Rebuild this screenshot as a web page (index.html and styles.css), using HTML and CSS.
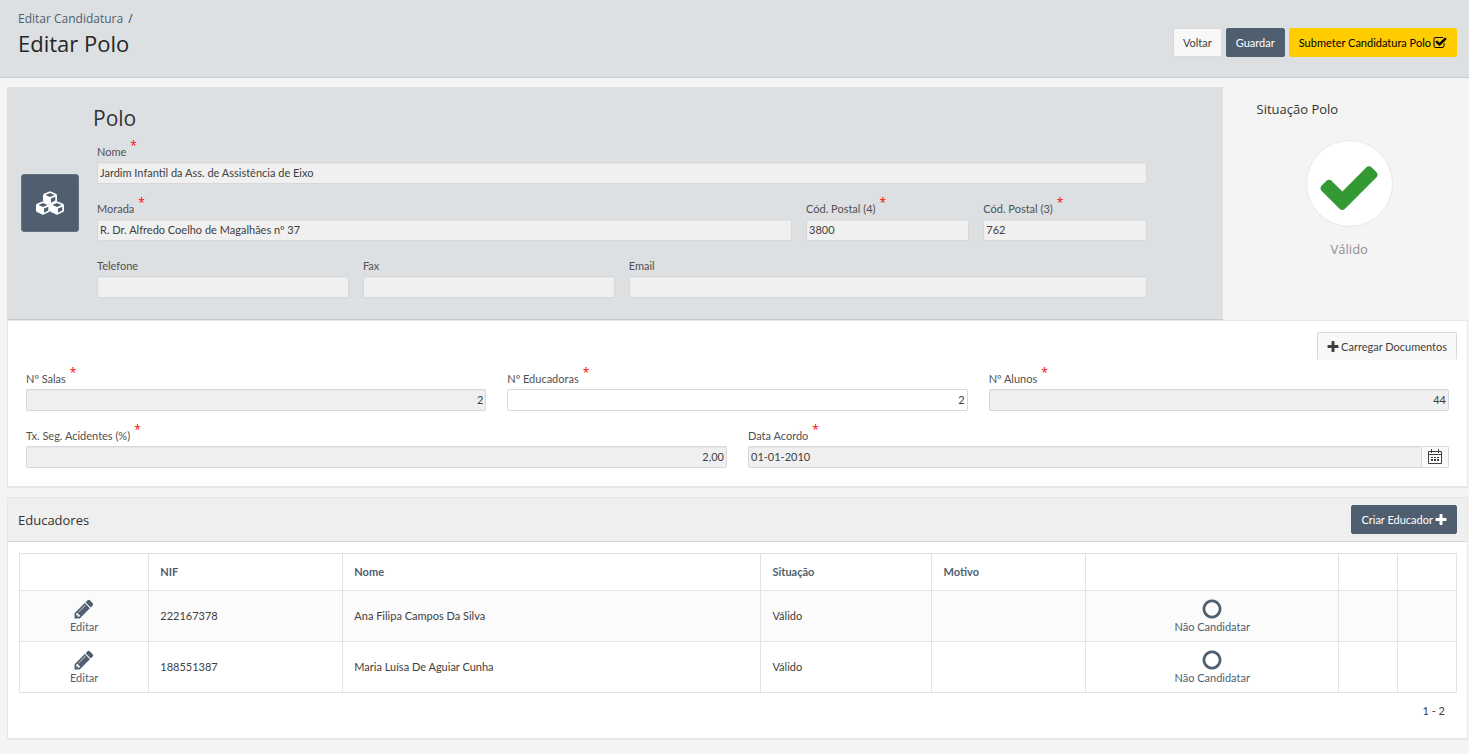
FILE: index.html
```html
<!DOCTYPE html>
<html lang="pt">
<head>
<meta charset="utf-8">
<title>Editar Polo</title>
<link rel="stylesheet" href="styles.css">
</head>
<body>
<svg class="defs" aria-hidden="true">
  <symbol id="i-plus" viewBox="128 0 1536 1792"><path d="M1600 736v192q0 40-28 68t-68 28h-416v416q0 40-28 68t-68 28h-192q-40 0-68-28t-28-68v-416h-416q-40 0-68-28t-28-68v-192q0-40 28-68t68-28h416v-416q0-40 28-68t68-28h192q40 0 68 28t28 68v416h416q40 0 68 28t28 68z"/></symbol>
  <symbol id="i-check" viewBox="0 0 1792 1792"><path d="M1671 566q0 40-28 68l-724 724-136 136q-28 28-68 28t-68-28l-136-136-362-362q-28-28-28-68t28-68l136-136q28-28 68-28t68 28l294 295 656-657q28-28 68-28t68 28l136 136q28 28 28 68z"/></symbol>
  <symbol id="i-pencil" viewBox="0 0 1792 1792"><path d="M491 1536l91-91-235-235-91 91v107h128v128h107zm523-928q0-22-22-22-10 0-17 7l-542 542q-7 7-7 17 0 22 22 22 10 0 17-7l542-542q7-7 7-17zm-54-192l416 416-832 832h-416v-416zm683 96q0 53-37 90l-166 166-416-416 166-165q36-38 90-38 53 0 91 38l235 234q37 39 37 91z"/></symbol>
  <symbol id="i-circle" viewBox="0 0 1792 1792"><path d="M896 352q-148 0-273 73t-198 198-73 273 73 273 198 198 273 73 273-73 198-198 73-273-73-273-198-198-273-73zm768 544q0 209-103 385.5t-279.5 279.5-385.5 103-385.5-103-279.5-279.5-103-385.5 103-385.5 279.5-279.5 385.5-103 385.5 103 279.5 279.5 103 385.5z"/></symbol>
  <symbol id="i-checkbox" viewBox="0 0 1792 1792"><path d="M1472 930v318q0 119-84.5 203.5t-203.5 84.5h-832q-119 0-203.5-84.5t-84.5-203.5v-832q0-119 84.5-203.5t203.5-84.5h832q63 0 117 25 15 7 18 23 3 17-9 29l-49 49q-10 10-23 10-3 0-9-2-23-6-45-6h-832q-66 0-113 47t-47 113v832q0 66 47 113t113 47h832q66 0 113-47t47-113v-254q0-13 9-22l64-64q10-10 23-10 6 0 12 3 20 8 20 29zm231-489l-814 814q-24 24-57 24t-57-24l-430-430q-24-24-24-57t24-57l110-110q24-24 57-24t57 24l263 263 647-647q24-24 57-24t57 24l110 110q24 24 24 57t-24 57z"/></symbol>
  <symbol id="i-cubes" viewBox="0 0 28 24">
    <g id="cube"><path fill="#fff" d="M14 0.4Q14.4 0.4 14.8 0.6L20 2.8Q21 3.3 21 4.4V9.6Q21 10.6 20.1 11L14.8 13.6Q14 14 13.2 13.6L7.9 11Q7 10.6 7 9.6V4.4Q7 3.3 8 2.8L13.2 0.6Q13.6 0.4 14 0.4Z"/><path fill="#4f5f6f" d="M14 2.1L18.6 4.1L14 6.1L9.4 4.1ZM15 7.6L19.3 5.8V9.5L15 11.7Z"/></g>
    <use href="#cube" x="-7" y="10"/><use href="#cube" x="7" y="10"/>
  </symbol>
  <symbol id="i-calendar" viewBox="0 0 16 16"><path fill="none" stroke="currentColor" d="M1.5 2.500h13v12h-13zM1 5.500h14M4.500 0v4M11.500 0v4"/><path d="M4 8h2v1H4zM7 8h2v1H7zM10 8h2v1h-2zM4 10h2v2H4zM7 10h2v2H7zM10 10h2v2h-2z"/></symbol>
</svg>

<header class="page-head">
  <div>
    <nav class="crumbs"><a href="#">Editar Candidatura</a><span>/</span></nav>
    <h1>Editar Polo</h1>
  </div>
  <div class="actions">
    <button class="btn btn-light" type="button">Voltar</button>
    <button class="btn btn-dark" type="button">Guardar</button>
    <button class="btn btn-yellow" type="button">Submeter Candidatura Polo <svg class="ico"><use href="#i-checkbox"/></svg></button>
  </div>
</header>

<main>
  <div class="top">
    <section class="hero">
      <div class="hero-icon"><svg class="cubes"><use href="#i-cubes"/></svg></div>
      <div class="hero-body">
        <h2>Polo</h2>
        <div class="grid">
          <div class="field s12"><label for="nome">Nome <b>*</b></label><input id="nome" readonly value="Jardim Infantil da Ass. de Assistência de Eixo"></div>
          <div class="field s8"><label for="morada">Morada <b>*</b></label><input id="morada" readonly value="R. Dr. Alfredo Coelho de Magalhães nº 37"></div>
          <div class="field s2"><label for="cp4">Cód. Postal (4) <b>*</b></label><input id="cp4" readonly value="3800"></div>
          <div class="field s2"><label for="cp3">Cód. Postal (3) <b>*</b></label><input id="cp3" readonly value="762"></div>
          <div class="field s3"><label for="tel">Telefone</label><input id="tel" readonly></div>
          <div class="field s3"><label for="fax">Fax</label><input id="fax" readonly></div>
          <div class="field s6"><label for="email">Email</label><input id="email" readonly></div>
        </div>
      </div>
    </section>
    <aside class="status">
      <h3>Situação Polo</h3>
      <div class="status-mark"><svg><use href="#i-check"/></svg></div>
      <p>Válido</p>
    </aside>
  </div>

  <section class="card details">
    <div class="toolbar"><button class="btn btn-light btn-cut" type="button"><svg class="ico ico-plus"><use href="#i-plus"/></svg> Carregar Documentos</button></div>
    <div class="row">
      <div class="field"><label for="salas">Nº Salas <b>*</b></label><input class="num" id="salas" readonly value="2"></div>
      <div class="field"><label for="educ">Nº Educadoras <b>*</b></label><input class="num" id="educ" value="2"></div>
      <div class="field"><label for="alunos">Nº Alunos <b>*</b></label><input class="num" id="alunos" readonly value="44"></div>
    </div>
    <div class="row">
      <div class="field"><label for="taxa">Tx. Seg. Acidentes (%) <b>*</b></label><input class="num" id="taxa" readonly value="2,00"></div>
      <div class="field"><label for="data">Data Acordo <b>*</b></label>
        <div class="date"><input id="data" readonly value="01-01-2010"><button type="button" aria-label="Calendário"><svg><use href="#i-calendar"/></svg></button></div>
      </div>
    </div>
  </section>

  <section class="card">
    <div class="card-head"><h3>Educadores</h3><button class="btn btn-dark" type="button">Criar Educador <svg class="ico ico-plus"><use href="#i-plus"/></svg></button></div>
    <div class="card-body">
      <table>
        <colgroup><col class="c1"><col class="c2"><col class="c3"><col class="c4"><col class="c5"><col class="c6"><col class="c7"><col class="c7"></colgroup>
        <thead><tr><th></th><th>NIF</th><th>Nome</th><th>Situação</th><th>Motivo</th><th></th><th></th><th></th></tr></thead>
        <tbody>
          <tr><td class="act"><a href="#"><svg><use href="#i-pencil"/></svg>Editar</a></td><td>222167378</td><td>Ana Filipa Campos Da Silva</td><td>Válido</td><td></td><td class="act"><a href="#"><svg><use href="#i-circle"/></svg>Não Candidatar</a></td><td></td><td></td></tr>
          <tr><td class="act"><a href="#"><svg><use href="#i-pencil"/></svg>Editar</a></td><td>188551387</td><td>Maria Luísa De Aguiar Cunha</td><td>Válido</td><td></td><td class="act"><a href="#"><svg><use href="#i-circle"/></svg>Não Candidatar</a></td><td></td><td></td></tr>
        </tbody>
      </table>
      <p class="pager">1 - 2</p>
    </div>
  </section>
</main>
</body>
</html>
```
FILE: styles.css
```css
* { box-sizing: border-box; }
body { margin: 0; background: #f4f4f4; color: #404040; font: 11px/16px Lato, "Open Sans", sans-serif; }
h1, h2, h3, p { margin: 0; font-weight: 400; }
a { color: inherit; text-decoration: none; }
button, input { font: inherit; color: inherit; }
svg { fill: currentColor; display: block; }
.defs { position: absolute; width: 0; height: 0; }

.page-head { display: flex; justify-content: space-between; align-items: flex-start; padding: 10px 12px 19px 18px; background: #dde0e3; border-bottom: 1px solid #c8cbce; }
.crumbs { display: flex; gap: 5px; font-family: "Open Sans", sans-serif; font-size: 12px; line-height: 18px; color: #4f5f6f; }
.crumbs span { color: #404040; }
h1 { font-family: "Open Sans", sans-serif; font-size: 22px; line-height: 30px; color: #262626; }
.actions { display: flex; gap: 4px; padding-top: 18px; }
.btn { display: inline-flex; align-items: center; gap: 2px; height: 29px; padding: 0 9px; border: 1px solid transparent; border-radius: 2px; white-space: nowrap; }
.btn-light { background: #f8f8f8; border-color: #dadada; }
.btn-dark { background: #4f5f6f; border-color: #4f5f6f; color: #fff; }
.btn-yellow { background: #fc0; border-color: #fc0; color: #000; }
.btn-cut { height: 28px; margin-bottom: 1px; border-bottom: 0; }
.ico { width: 14px; height: 14px; }
.ico-plus { width: 12px; }

main { padding: 9px 1px 15px 7px; }
.top { display: flex; }
.hero { width: 83.2%; display: flex; padding: 14px 76px 21px 14px; background: #dde0e3; border-bottom: 1px solid #c4c8cb; }
.hero-icon { display: grid; place-items: center; width: 58px; height: 58px; margin: 73px 18px 0 0; background: #4f5f6f; border: 1px solid #66727f; border-radius: 3px; }
.cubes { width: 28px; height: 24px; }
.hero-body { flex: 1; }
h2 { margin: 4px 0 10px -4px; font-family: "Open Sans", sans-serif; font-size: 21px; line-height: 27px; color: #333; }
.grid { display: grid; grid-template-columns: repeat(12, 1fr); gap: 15px 14px; }
.s12 { grid-column: span 12; }
.s8 { grid-column: span 8; }
.s6 { grid-column: span 6; }
.s3 { grid-column: span 3; }
.s2 { grid-column: span 2; }
.field { min-width: 0; flex: 1; }
label { display: flex; gap: 4px; line-height: 20px; color: #505050; }
label b { font-family: "Open Sans", sans-serif; font-size: 12px; font-weight: 400; line-height: 8px; color: #f00; }
input { display: block; width: 100%; height: 22px; padding: 0 2px 2px; background: #fff; border: 1px solid #d8d8d8; border-radius: 2px; outline: 0; }
input[readonly] { background: #f0f0f0; box-shadow: inset 0 1px 1px #e6e6e6; }
.num { text-align: right; }

.status { flex: 1; display: flex; flex-direction: column; align-items: center; padding: 12px 26px 0 34px; }
.status h3 { align-self: flex-start; font-family: "Open Sans", sans-serif; font-size: 13px; line-height: 20px; color: #333; }
.status-mark { display: grid; place-items: center; width: 87px; height: 87px; margin-top: 21px; padding-top: 6px; background: #fff; border: 1px solid #e8e8e8; border-radius: 50%; color: #393; }
.status-mark svg { width: 66px; height: 66px; }
.status p { margin-top: 12px; font-family: "Open Sans", sans-serif; font-size: 13px; line-height: 20px; color: #909090; }

.card { margin-bottom: 9px; background: #fff; border: 1px solid #e8e8e8; border-bottom: 2px solid #e6e6e6; }
.details { padding: 11px 18px 18px; }
.toolbar { display: flex; justify-content: flex-end; margin: 0 -8px 8px 0; }
.row { display: flex; gap: 21px; }
.row + .row { margin-top: 15px; }
.date { display: flex; }
.date input { flex: 1; border-radius: 2px 0 0 2px; }
.date button { display: grid; place-items: center; width: 27px; padding: 0; background: #fafafa; border: 1px solid #d8d8d8; border-left: 0; border-radius: 0 2px 2px 0; }
.date svg { width: 16px; height: 16px; }

.card-head { display: flex; justify-content: space-between; align-items: center; height: 44px; padding: 0 10px; background: #efefef; border-bottom: 1px solid #d5d5d5; }
.card-head h3 { font-family: "Open Sans", sans-serif; font-size: 13px; line-height: 20px; color: #333; }
.card-body { padding: 11px 10px 10px 11px; }
table { width: 100%; table-layout: fixed; border-collapse: collapse; }
.c1 { width: 9%; }
.c2 { width: 13.5%; }
.c3 { width: 29.1%; }
.c4 { width: 11.9%; }
.c5 { width: 10.7%; }
.c6 { width: 17.6%; }
.c7 { width: 4.1%; }
th, td { padding: 0 11px; border: 1px solid #e3e3e3; text-align: left; }
th { height: 37px; color: #4f5f6f; font-weight: 700; }
td { height: 51px; }
tbody tr:nth-child(odd) { background: #fbfbfb; }
.act a { display: flex; flex-direction: column; align-items: center; color: #4f5f6f; }
.act svg { width: 22px; height: 22px; margin-bottom: -1px; }
.pager { padding: 10px 12px 9px; text-align: right; }
```
